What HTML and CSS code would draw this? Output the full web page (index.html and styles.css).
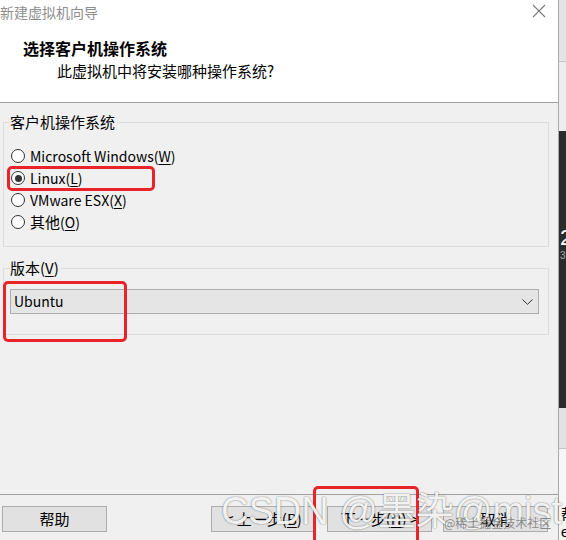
FILE: index.html
```html
<!DOCTYPE html>
<html lang="zh-CN">
<head>
<meta charset="utf-8">
<title>新建虚拟机向导</title>
<link rel="stylesheet" href="styles.css">
</head>
<body>
<div class="screen">
  <div class="dialog">
    <div class="top">
      <div class="titlebar">
        <span class="title">新建虚拟机向导</span>
        <svg class="close" viewBox="0 0 14 14" width="14" height="14"><path d="M1 1 L13 13 M13 1 L1 13" stroke="#7a7a7a" stroke-width="1.1" fill="none"/></svg>
      </div>
      <div class="header">
        <div class="h1">选择客户机操作系统</div>
        <div class="h2">此虚拟机中将安装哪种操作系统?</div>
      </div>
    </div>
    <div class="body">
      <fieldset class="group os">
        <legend>客户机操作系统</legend>
        <div class="radio"><span class="circle"></span>Microsoft Windows(<u>W</u>)</div>
        <div class="radio"><span class="circle checked"></span>Linux(<u>L</u>)</div>
        <div class="radio"><span class="circle"></span>VMware ESX(<u>X</u>)</div>
        <div class="radio"><span class="circle"></span><span class="cjk">其他</span>(<u>O</u>)</div>
      </fieldset>
      <fieldset class="group ver">
        <legend>版本(<u>V</u>)</legend>
        <div class="select">
          <span>Ubuntu</span>
          <svg class="chev" viewBox="0 0 11 6" width="11" height="6"><polyline points="0.5,0.5 5.5,5.3 10.5,0.5" stroke="#333" stroke-width="1" fill="none"/></svg>
        </div>
      </fieldset>
    </div>
    <div class="footer">
      <button class="btn help">帮助</button>
      <button class="btn">&lt; 上一步(<u>B</u>)</button>
      <button class="btn">下一步(<u>N</u>) &gt;</button>
      <button class="btn">取消</button>
    </div>
  </div>
  <div class="strip">
    <div class="s1"></div>
    <div class="s2"></div>
    <div class="s3"><span class="n2">2</span><span class="n3">3</span></div>
    <div class="s4"></div>
    <div class="s5"><span class="t1">帮</span><span class="t2">er</span></div>
  </div>

  <div class="mark mark-linux"></div>
  <div class="mark mark-ubuntu"></div>
  <div class="mark mark-next"></div>
  <div class="wm">CSDN @墨染@mist</div>
  <div class="wm2">@稀土掘金技术社区</div>
</div>
</body>
</html>
```

FILE: styles.css
```css
* { box-sizing: border-box; }
html, body { margin: 0; padding: 0; }
body {
  width: 566px;
  height: 540px;
  overflow: hidden;
  background: #f0f0f0;
  font-family: "Noto Sans CJK SC", "Microsoft YaHei", sans-serif;
  font-size: 15px;
  color: #000;
}
u { text-decoration-thickness: 1px; text-underline-offset: 2px; }

.screen {
  position: relative;
  display: flex;
  width: 566px;
  height: 540px;
}

.dialog {
  width: 559px;
  height: 540px;
  display: flex;
  flex-direction: column;
  background: #f0f0f0;
  border-right: 1px solid #a9a9a9;
}

.top {
  background: #fff;
  border-bottom: 1px solid #a0a0a0;
}
.titlebar {
  height: 24px;
  display: flex;
  align-items: center;
  justify-content: space-between;
  padding-right: 12px;
}
.title {
  font-size: 14px;
  line-height: 24px;
  color: #8e8e8e;
}
.close { display: block; margin-top: -2px; }

.header { padding: 14px 0 21px; }
.h1 {
  padding-left: 23px;
  font-size: 16px;
  font-weight: 700;
  line-height: 20px;
}
.h2 {
  padding-left: 57px;
  margin-top: 3px;
  font-size: 15px;
  line-height: 20px;
}

.body {
  flex: 1;
  padding-top: 9px;
}

.group {
  margin: 0 9px 0 3px;
  border: 1px solid #dcdcdc;
  padding: 13px 9px 13px 6px;
  min-width: 0;
}
.group legend {
  padding: 0 2px 0 0;
  font-size: 15px;
  line-height: 20px;
}
.ver { margin-top: 11px; padding-top: 11px; padding-bottom: 20px; }

.radio {
  height: 22px;
  display: flex;
  align-items: center;
  font-size: 14px;
  line-height: 22px;
  white-space: nowrap;
}
.cjk { font-size: 15px; }
.circle {
  position: relative;
  width: 14px;
  height: 14px;
  margin: 0 5px 0 1px;
  border: 1px solid #333;
  border-radius: 50%;
  background: #fff;
  flex: none;
}
.circle.checked::after {
  content: "";
  position: absolute;
  left: 2.5px;
  top: 2.5px;
  width: 7px;
  height: 7px;
  border-radius: 50%;
  background: #333;
}

.select {
  height: 25px;
  display: flex;
  align-items: center;
  justify-content: space-between;
  padding: 0 5px 0 3px;
  background: #e5e5e5;
  border: 1px solid #adadad;
  font-size: 14px;
  line-height: 23px;
}
.chev { display: block; }

.footer {
  height: 46px;
  border-top: 1px solid #a0a0a0;
  display: flex;
  gap: 11px;
  padding: 11px 10px 0 2px;
}
.btn {
  width: 105px;
  height: 26px;
  padding: 0;
  background: #e1e1e1;
  border: 1px solid #adadad;
  font-family: inherit;
  font-size: 15px;
  color: #000;
  line-height: 24px;
}
.help { margin-right: auto; }

.strip {
  width: 7px;
  display: flex;
  flex-direction: column;
  overflow: hidden;
}
.s1 { height: 62px; background: #e4e4e4; border-bottom: 1px solid #c6c6c6; }
.s2 { height: 70px; background: #ededed; }
.s3 {
  height: 278px;
  background: #2b2b2b;
  display: flex;
  flex-direction: column;
  padding: 96px 0 0 1px;
  color: #fff;
}
.n2 { font-family: "Liberation Sans", sans-serif; font-size: 22px; line-height: 22px; }
.n3 { font-family: "Liberation Sans", sans-serif; font-size: 10px; line-height: 14px; color: #aaa; }
.s4 { height: 41px; background: #e2e2e2; border-bottom: 1px solid #c4c4c4; }
.s5 {
  flex: 1;
  background: #f6f6f6;
  display: flex;
  flex-direction: column;
  padding: 55px 0 0 2px;
  white-space: nowrap;
}
.t1 { font-size: 15px; line-height: 20px; }
.t2 { font-family: "Liberation Sans", sans-serif; font-size: 14px; line-height: 16px; }

.mark {
  position: absolute;
  border: 3px solid #e8242a;
  border-radius: 5px;
}
.mark-linux { left: 7px; top: 166px; width: 148px; height: 25px; }
.mark-ubuntu { left: 3px; top: 281px; width: 124px; height: 61px; }
.mark-next { left: 313px; top: 486px; width: 106px; height: 62px; }

.wm {
  position: absolute;
  left: 221px;
  top: 492px;
  font-family: "Liberation Sans", "Noto Sans CJK SC", sans-serif;
  font-size: 38px;
  line-height: 38px;
  color: rgba(255, 255, 255, 0.92);
  text-shadow: 0 0 2px rgba(0, 0, 0, 0.35), 0 0 1px rgba(0, 0, 0, 0.3);
  white-space: nowrap;
}
.wm2 {
  position: absolute;
  left: 444px;
  top: 515px;
  font-size: 12px;
  line-height: 16px;
  color: rgba(110, 110, 110, 0.75);
  white-space: nowrap;
}
```
